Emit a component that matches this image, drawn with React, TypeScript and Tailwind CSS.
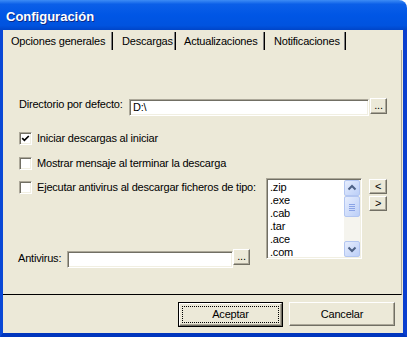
const sunken =
  "border border-t-[#aca899] border-l-[#aca899] border-r-white border-b-white shadow-[inset_1px_1px_0_#716f64,inset_-1px_-1px_0_#f1efe2]";
const raised =
  "border border-t-white border-l-white border-r-[#716f64] border-b-[#716f64] shadow-[inset_-1px_-1px_0_#aca899] bg-[#ece9d8]";

function Checkbox({ checked }: { checked?: boolean }) {
  return (
    <div className={`w-[13px] h-[13px] shrink-0 bg-white flex items-center justify-center ${sunken}`}>
      {checked ? (
        <svg width="9" height="9" viewBox="0 0 9 9">
          <path d="M1.2 4.2 L3.4 6.4 L7.8 2" fill="none" stroke="#000" strokeWidth="1.7" />
        </svg>
      ) : null}
    </div>
  );
}

function CheckRow({ label, checked }: { label: string; checked?: boolean }) {
  return (
    <div className="flex items-start h-[13px]">
      <Checkbox checked={checked} />
      <span className="ml-[5px] whitespace-nowrap">{label}</span>
    </div>
  );
}

function SmallButton({ children, className = "" }: { children: React.ReactNode; className?: string }) {
  return (
    <div className={`shrink-0 flex items-center justify-center ${raised} ${className}`}>
      {children}
    </div>
  );
}

function Arrow({ dir }: { dir: "up" | "down" }) {
  return (
    <svg width="14" height="14" viewBox="0 0 14 14">
      <path
        d={dir === "up" ? "M3.5 8.5 L7 5 L10.5 8.5" : "M3.5 5.5 L7 9 L10.5 5.5"}
        fill="none"
        stroke="#4d6185"
        strokeWidth="2"
      />
    </svg>
  );
}

const xpPart =
  "rounded-[2px] border border-[#b3c6f1] bg-[linear-gradient(to_bottom_right,#e6edfd,#bccff8)] flex items-center justify-center";

function ListBox() {
  const items = [".zip", ".exe", ".cab", ".tar", ".ace", ".com"];
  return (
    <div className={`w-[96px] h-[81px] shrink-0 bg-white flex ${sunken} p-[1px]`}>
      <div className="flex-1 overflow-hidden pl-[2px] pt-[1px]">
        {items.map((it) => (
          <div key={it} className="h-[13px]">
            {it}
          </div>
        ))}
      </div>
      <div className="w-[16px] flex flex-col bg-[#f5f4ee]">
        <div className={`h-[16px] ${xpPart}`}>
          <Arrow dir="up" />
        </div>
        <div className={`h-[21px] ${xpPart}`}>
          <svg width="8" height="8" viewBox="0 0 8 8">
            <path d="M1 1.5H7M1 3.5H7M1 5.5H7M1 7.5H7" stroke="#8aa3e6" strokeWidth="1" />
          </svg>
        </div>
        <div className="flex-1" />
        <div className={`h-[16px] ${xpPart}`}>
          <Arrow dir="down" />
        </div>
      </div>
    </div>
  );
}

export default function App() {
  const tabs = [
    { label: "Opciones generales", w: "w-[110px]", pl: "pl-[8px]" },
    { label: "Descargas", w: "w-[63px]", pl: "pl-[9px]" },
    { label: "Actualizaciones", w: "w-[89px]", pl: "pl-[8px]" },
    { label: "Notificaciones", w: "w-[81px]", pl: "pl-[9px]" },
  ];
  return (
    <div className="w-[407px] h-[337px] flex flex-col bg-white font-['Liberation_Sans',Arial,sans-serif] text-[11px] leading-[13px] tracking-[-0.2px] text-black">
      <div className="h-[30px] shrink-0 rounded-tr-[8px] bg-[linear-gradient(to_bottom,#3d8cf5_0%,#0b5fe8_14%,#0056e5_50%,#0053df_85%,#0045c8_100%)] pl-[6px] pt-[9px] text-[13px] leading-[15px] tracking-normal font-bold text-white [text-shadow:1px_1px_0_#0b2a8a]">
        Configuración
      </div>
      <div className="flex-1 flex flex-col bg-[#ece9d8] border-l-[3px] border-r-[4px] border-b-[4px] border-l-[#0a48d6] border-r-[#0a3fcf] border-b-[#0035bd]">
        {/* tabs */}
        <div className="h-[20px] shrink-0 flex pt-[2px]">
          {tabs.map((t) => (
            <div
              key={t.label}
              className={`h-[18px] ${t.w} ${t.pl} pt-[3px] whitespace-nowrap border-r border-r-black shadow-[inset_-1px_0_0_#808080]`}
            >
              {t.label}
            </div>
          ))}
        </div>

        {/* panel */}
        <div className="h-[245px] shrink-0 flex flex-col pl-[16px] mr-[1px] border-r border-r-[#aca899] border-b border-b-black">
          <div className="mt-[48px] flex items-start h-[18px]">
            <span className="w-[110px] shrink-0 whitespace-nowrap">Directorio por defecto:</span>
            <div className={`mt-[1px] w-[240px] h-[17px] bg-white pl-[3px] pt-[1px] ${sunken}`}>D:\</div>
            <SmallButton className="w-[17px] h-[16px] ml-[1px] pb-[2px]">...</SmallButton>
          </div>

          <div className="mt-[16px]">
            <CheckRow label="Iniciar descargas al iniciar" checked />
          </div>
          <div className="mt-[12px]">
            <CheckRow label="Mostrar mensaje al terminar la descarga" />
          </div>

          <div className="mt-[8px] flex items-start">
            <div className="w-[247px] shrink-0 flex flex-col">
              <div className="mt-[3px]">
                <CheckRow label="Ejecutar antivirus al descargar ficheros de tipo:" />
              </div>
              <div className="mt-[55px] -ml-[1px] flex items-start h-[18px]">
                <span className="w-[49px] shrink-0 mt-[3px]">Antivirus:</span>
                <div className={`mt-[2px] w-[166px] h-[17px] bg-white ${sunken}`} />
                <SmallButton className="w-[17px] h-[16px] pb-[2px]">...</SmallButton>
              </div>
            </div>
            <ListBox />
            <div className="ml-[7px] flex flex-col">
              <SmallButton className="mt-[1px] w-[18px] h-[15px]">&lt;</SmallButton>
              <SmallButton className="mt-[2px] w-[18px] h-[15px]">&gt;</SmallButton>
            </div>
          </div>
        </div>

        {/* footer */}
        <div className="flex-1 flex justify-end items-start pt-[7px] pr-[8px] gap-[6px]">
          <div className="w-[105px] h-[25px] border border-black flex">
            <div className={`flex-1 flex p-[2px] ${raised}`}>
              <div className="flex-1 border border-dotted border-black flex items-center justify-center">
                Aceptar
              </div>
            </div>
          </div>
          <SmallButton className="w-[106px] h-[24px]">Cancelar</SmallButton>
        </div>
      </div>
    </div>
  );
}
